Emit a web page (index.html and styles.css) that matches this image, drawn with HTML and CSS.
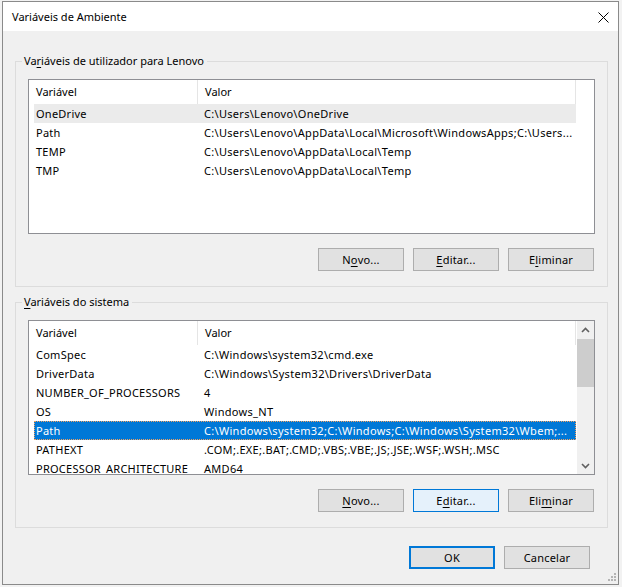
FILE: index.html
```html
<!DOCTYPE html>
<html lang="pt">
<head>
<meta charset="utf-8">
<title>Variáveis de Ambiente</title>
<link rel="stylesheet" href="styles.css">
</head>
<body>
<div class="window">
  <div class="titlebar">
    <span class="title">Variáveis de Ambiente</span>
    <svg class="close" width="11" height="11" viewBox="0 0 11 11"><path d="M0.5 0.5 L10.5 10.5 M10.5 0.5 L0.5 10.5" stroke="#000" stroke-width="1" fill="none"/></svg>
  </div>
  <div class="content">
    <div class="group">
      <div class="legend">Va<u>r</u>iáveis de utilizador para Lenovo</div>
      <div class="list">
        <div class="lv-main">
          <div class="lv-head"><div class="hc c1">Variável</div><div class="hc c2">Valor</div></div>
          <div class="row hot"><span class="n">OneDrive</span><span class="v">C:\Users\Lenovo\OneDrive</span></div>
          <div class="row"><span class="n">Path</span><span class="v">C:\Users\Lenovo\AppData\Local\Microsoft\WindowsApps;C:\Users...</span></div>
          <div class="row"><span class="n">TEMP</span><span class="v">C:\Users\Lenovo\AppData\Local\Temp</span></div>
          <div class="row"><span class="n">TMP</span><span class="v">C:\Users\Lenovo\AppData\Local\Temp</span></div>
        </div>
      </div>
      <div class="btnrow">
        <div class="btn">N<u>o</u>vo...</div>
        <div class="btn"><u>E</u>ditar...</div>
        <div class="btn">E<u>l</u>iminar</div>
      </div>
    </div>

    <div class="group g2">
      <div class="legend"><u>V</u>ariáveis do sistema</div>
      <div class="list">
        <div class="lv-main">
          <div class="lv-head"><div class="hc c1">Variável</div><div class="hc c2">Valor</div></div>
          <div class="row"><span class="n">ComSpec</span><span class="v">C:\Windows\system32\cmd.exe</span></div>
          <div class="row"><span class="n">DriverData</span><span class="v">C:\Windows\System32\Drivers\DriverData</span></div>
          <div class="row"><span class="n">NUMBER_OF_PROCESSORS</span><span class="v">4</span></div>
          <div class="row"><span class="n">OS</span><span class="v">Windows_NT</span></div>
          <div class="row sel"><span class="n">Path</span><span class="v">C:\Windows\system32;C:\Windows;C:\Windows\System32\Wbem;...</span></div>
          <div class="row"><span class="n">PATHEXT</span><span class="v">.COM;.EXE;.BAT;.CMD;.VBS;.VBE;.JS;.JSE;.WSF;.WSH;.MSC</span></div>
          <div class="row"><span class="n">PROCESSOR_ARCHITECTURE</span><span class="v">AMD64</span></div>
        </div>
        <div class="vscroll">
          <div class="arrow"><svg width="9" height="6" viewBox="0 0 9 6"><path d="M1 5 L4.5 1.5 L8 5" stroke="#606060" stroke-width="1.6" fill="none"/></svg></div>
          <div class="thumb"></div>
          <div class="arrow down"><svg width="9" height="6" viewBox="0 0 9 6"><path d="M1 1 L4.5 4.5 L8 1" stroke="#606060" stroke-width="1.6" fill="none"/></svg></div>
        </div>
      </div>
      <div class="btnrow">
        <div class="btn"><u>N</u>ovo...</div>
        <div class="btn hover">E<u>d</u>itar...</div>
        <div class="btn">Eli<u>m</u>inar</div>
      </div>
    </div>

    <div class="dlgrow">
      <div class="btn default">OK</div>
      <div class="btn">Cancelar</div>
    </div>
  </div>
  <svg class="grip" width="10" height="10" viewBox="0 0 10 10">
    <rect x="7" y="0" width="2" height="2" fill="#b4b4b4"/>
    <rect x="4" y="3" width="2" height="2" fill="#b4b4b4"/>
    <rect x="7" y="3" width="2" height="2" fill="#b4b4b4"/>
    <rect x="1" y="6" width="2" height="2" fill="#b4b4b4"/>
    <rect x="4" y="6" width="2" height="2" fill="#b4b4b4"/>
    <rect x="7" y="6" width="2" height="2" fill="#b4b4b4"/>
  </svg>
</div>
</body>
</html>
```

FILE: styles.css
```css
html, body {
  margin: 0;
  padding: 0;
}
body {
  width: 622px;
  height: 587px;
  overflow: hidden;
  background: #f2f2f2;
  font-family: "Noto Sans", "Open Sans", sans-serif;
  font-size: 11px;
  color: #000;
}
u {
  text-decoration: underline;
  text-underline-offset: 2px;
}
.window {
  position: relative;
  box-sizing: border-box;
  margin: 1px 0 0 2px;
  width: 617px;
  height: 584px;
  border: 1px solid #8a8a8a;
  background: #f0f0f0;
  display: flex;
  flex-direction: column;
}
.titlebar {
  height: 29px;
  flex: none;
  background: #fff;
  display: flex;
  align-items: center;
  justify-content: space-between;
  padding: 0 9px 0 9px;
}
.title {
  font-size: 11px;
  line-height: 16px;
  padding-top: 1px;
}
.close {
  display: block;
  margin-top: 1px;
}
.content {
  display: flex;
  flex-direction: column;
  padding: 30px 10px 0 12px;
}
.group {
  box-sizing: border-box;
  height: 226px;
  border: 1px solid #dcdcdc;
  display: flex;
  flex-direction: column;
  padding: 0 12px 0 12px;
}
.g2 {
  margin-top: 15px;
}
.legend {
  align-self: flex-start;
  margin: -9px 0 0 -6px;
  padding: 0 3px 0 2px;
  line-height: 16px;
  height: 16px;
  background: #f0f0f0;
}
.list {
  box-sizing: border-box;
  margin-top: 10px;
  height: 155px;
  border: 1px solid #8e8f94;
  background: #fff;
  overflow: hidden;
  display: flex;
}
.lv-main {
  flex: 1;
  overflow: hidden;
}
.lv-head {
  display: flex;
  height: 24px;
}
.hc {
  box-sizing: border-box;
  height: 24px;
  line-height: 24px;
  padding-left: 7px;
  border-right: 1px solid #e5e5e5;
  white-space: nowrap;
}
.hc.c1 { width: 169px; }
.hc.c2 { width: 378px; }
.row {
  display: grid;
  grid-template-columns: 163px 379px;
  width: 542px;
  margin-left: 5px;
  height: 19px;
  line-height: 19px;
  box-sizing: border-box;
  letter-spacing: 0.25px;
}
.row span {
  white-space: nowrap;
  overflow: hidden;
}
.row .n { padding-left: 2px; }
.row .v { padding-left: 7px; letter-spacing: 0.3px; }
.row.hot { background: #ebebeb; }
.row.sel {
  background: #0078d7;
  color: #fff;
  outline: 1px dotted #f3a15f;
  outline-offset: -1px;
}
.vscroll {
  width: 17px;
  flex: none;
  background: #f0f0f0;
  display: flex;
  flex-direction: column;
}
.arrow {
  height: 17px;
  display: flex;
  align-items: center;
  justify-content: center;
}
.arrow svg { display: block; }
.arrow.down { margin-top: auto; }
.thumb {
  margin-top: 1px;
  height: 48px;
  background: #cdcdcd;
}
.btnrow {
  display: flex;
  justify-content: flex-end;
  gap: 9px;
  margin-top: 14px;
  padding-right: 1px;
}
.btn {
  box-sizing: border-box;
  width: 86px;
  height: 23px;
  border: 1px solid #adadad;
  background: #e1e1e1;
  display: flex;
  align-items: center;
  justify-content: center;
  line-height: 16px;
  letter-spacing: 0.2px;
}
.btn.hover {
  background: #e5f1fb;
  border-color: #0078d7;
}
.btn.default {
  border: 2px solid #0078d7;
}
.dlgrow {
  display: flex;
  justify-content: flex-end;
  gap: 9px;
  margin-top: 18px;
  padding-right: 18px;
}
.grip {
  position: absolute;
  right: 1px;
  bottom: 1px;
}
```
